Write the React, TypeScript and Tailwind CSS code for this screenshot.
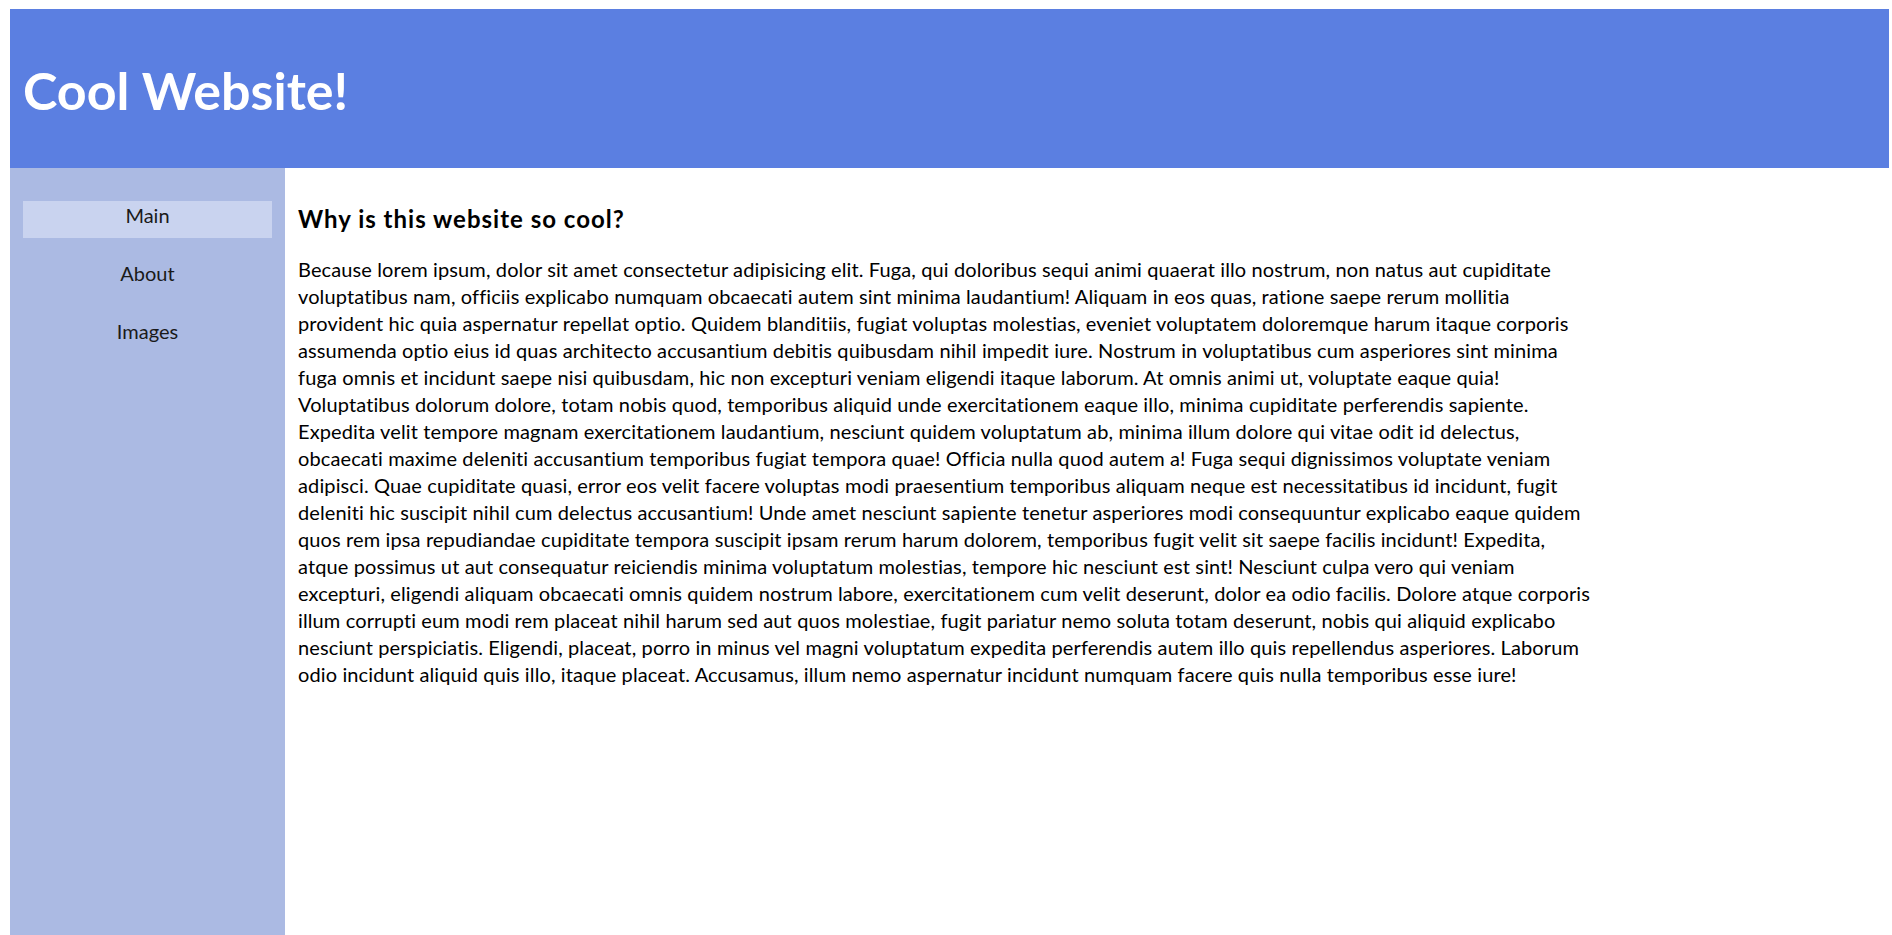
import React from "react";

const lines = [
  "Because lorem ipsum, dolor sit amet consectetur adipisicing elit. Fuga, qui doloribus sequi animi quaerat illo nostrum, non natus aut cupiditate",
  "voluptatibus nam, officiis explicabo numquam obcaecati autem sint minima laudantium! Aliquam in eos quas, ratione saepe rerum mollitia",
  "provident hic quia aspernatur repellat optio. Quidem blanditiis, fugiat voluptas molestias, eveniet voluptatem doloremque harum itaque corporis",
  "assumenda optio eius id quas architecto accusantium debitis quibusdam nihil impedit iure. Nostrum in voluptatibus cum asperiores sint minima",
  "fuga omnis et incidunt saepe nisi quibusdam, hic non excepturi veniam eligendi itaque laborum. At omnis animi ut, voluptate eaque quia!",
  "Voluptatibus dolorum dolore, totam nobis quod, temporibus aliquid unde exercitationem eaque illo, minima cupiditate perferendis sapiente.",
  "Expedita velit tempore magnam exercitationem laudantium, nesciunt quidem voluptatum ab, minima illum dolore qui vitae odit id delectus,",
  "obcaecati maxime deleniti accusantium temporibus fugiat tempora quae! Officia nulla quod autem a! Fuga sequi dignissimos voluptate veniam",
  "adipisci. Quae cupiditate quasi, error eos velit facere voluptas modi praesentium temporibus aliquam neque est necessitatibus id incidunt, fugit",
  "deleniti hic suscipit nihil cum delectus accusantium! Unde amet nesciunt sapiente tenetur asperiores modi consequuntur explicabo eaque quidem",
  "quos rem ipsa repudiandae cupiditate tempora suscipit ipsam rerum harum dolorem, temporibus fugit velit sit saepe facilis incidunt! Expedita,",
  "atque possimus ut aut consequatur reiciendis minima voluptatum molestias, tempore hic nesciunt est sint! Nesciunt culpa vero qui veniam",
  "excepturi, eligendi aliquam obcaecati omnis quidem nostrum labore, exercitationem cum velit deserunt, dolor ea odio facilis. Dolore atque corporis",
  "illum corrupti eum modi rem placeat nihil harum sed aut quos molestiae, fugit pariatur nemo soluta totam deserunt, nobis qui aliquid explicabo",
  "nesciunt perspiciatis. Eligendi, placeat, porro in minus vel magni voluptatum expedita perferendis autem illo quis repellendus asperiores. Laborum",
  "odio incidunt aliquid quis illo, itaque placeat. Accusamus, illum nemo aspernatur incidunt numquam facere quis nulla temporibus esse iure!",
];

const navItems = [
  { label: "Main", active: true },
  { label: "About", active: false },
  { label: "Images", active: false },
];

export default function App() {
  return (
    <div className="h-screen overflow-hidden bg-white pt-[9px] pl-[10px] pr-[3px] flex flex-col font-['Lato',sans-serif] text-black">
      <header className="w-full h-[159px] shrink-0 bg-[#5b7fe1] pl-[13px] pt-[55px]">
        <h1 className="text-[52px] leading-[52px] font-bold text-white">Cool Website!</h1>
      </header>
      <div className="flex flex-1 w-full">
        <nav className="w-[275px] shrink-0 bg-[#abbae3] pt-[33px] px-[13px] flex flex-col gap-[21px]">
          {navItems.map((item) => (
            <div
              key={item.label}
              className={`h-[37px] text-center text-[20px] leading-[28px] text-[#1a1a1a] ${item.active ? "bg-[#c9d3ef]" : ""}`}
            >
              {item.label}
            </div>
          ))}
        </nav>
        <main className="pl-[13px] pt-[35px]">
          <h3 className="text-[24px] leading-[32px] font-bold tracking-[1px]">Why is this website so cool?</h3>
          <div className="mt-[21px] text-[20px] leading-[27px] tracking-[0.12px]">
            {lines.map((l, i) => (
              <div key={i} className="whitespace-nowrap">
                {l}
              </div>
            ))}
          </div>
        </main>
      </div>
    </div>
  );
}
